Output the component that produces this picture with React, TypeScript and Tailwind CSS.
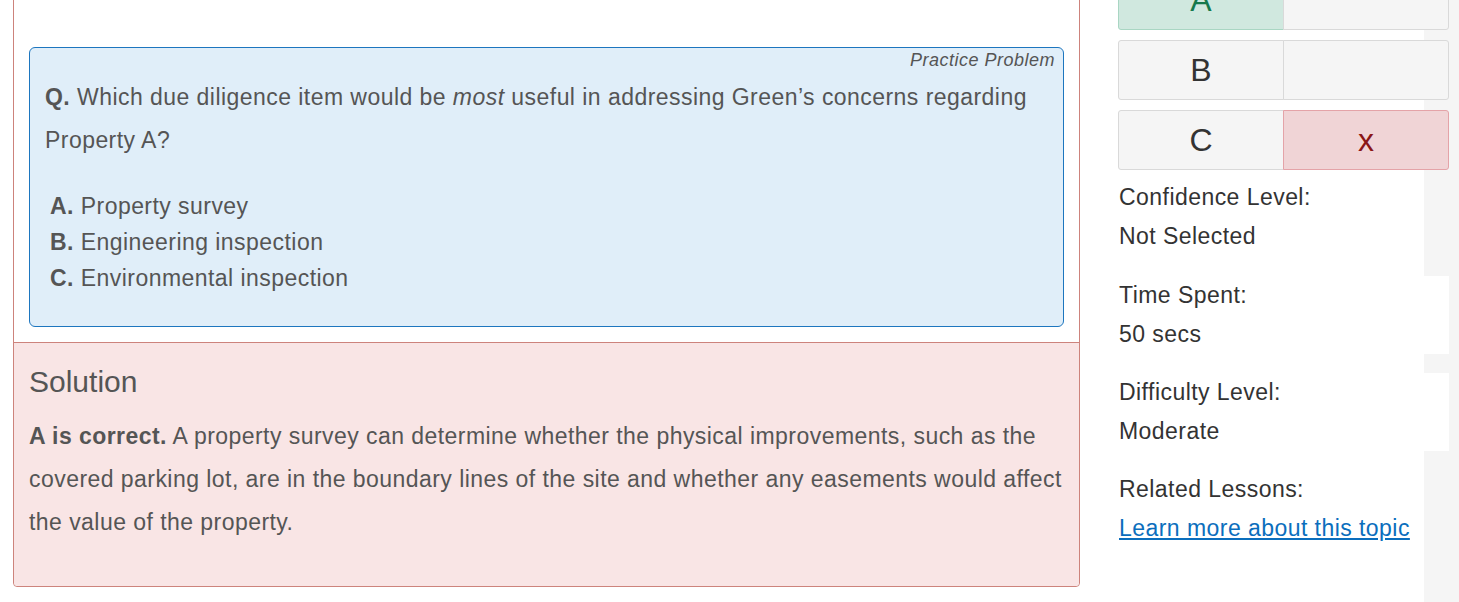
import React from 'react';

const options = [
    { letter: 'A', text: 'Property survey' },
    { letter: 'B', text: 'Engineering inspection' },
    { letter: 'C', text: 'Environmental inspection' },
];

const AnswerRow = ({ letter, state }: { letter: string; state: 'correct' | 'wrong' | 'none' }) => {
    const left =
        state === 'correct'
            ? 'bg-[#d0e8df] border-[#a9d6c3] text-[#16794d]'
            : 'bg-[#f5f5f5] border-[#d9d9d9] text-[#333]';
    const right =
        state === 'wrong'
            ? 'bg-[#f0d4d6] border-[#e4a3a8] text-[#8b1616]'
            : 'bg-[#f5f5f5] border-[#d9d9d9] text-[#333]';

    return (
        <div className="flex h-[60px]">
            <div className={`flex w-[166px] items-center justify-center rounded-l-[3px] border text-[32px] ${left}`}>
                {letter}
            </div>
            <div className={`-ml-px flex w-[166px] items-center justify-center rounded-r-[3px] border text-[32px] ${right}`}>
                {state === 'wrong' ? 'x' : ''}
            </div>
        </div>
    );
};

const Stat = ({ label, value, boxed, className = '' }: { label: string; value: React.ReactNode; boxed?: boolean; className?: string }) => (
    <div className={`pl-px text-[23px] leading-[39px] tracking-[0.45px] text-[#333] ${boxed ? 'bg-white' : ''} ${className}`}>
        <div>{label}</div>
        <div>{value}</div>
    </div>
);

export default function App() {
    return (
        <div className="h-[602px] w-[1459px] overflow-hidden bg-[#f5f5f5] font-['Liberation_Sans',Arial,sans-serif]">
            {/* page is scrolled a little, so the top is cut off */}
            <div className="-mt-[30px] flex min-h-[632px] w-[1424px] bg-white">
                {/* Question + solution panel */}
                <div className="shrink-0 pl-[13px]">
                    <div className="w-[1067px] rounded-b-[4px] border border-[#cd837c]">
                        <div className="px-[15px] pt-[76px] pb-[15px]">
                            <div className="rounded-[6px] border border-[#1d76bf] bg-[#e0eef9] pr-[8px] pb-[30px] pl-[15px] text-[#555]">
                                <div className="text-right text-[18px] leading-[24px] tracking-[0.5px] italic">Practice Problem</div>
                                <p className="mt-[4px] text-[23px] leading-[43px] tracking-[0.45px]">
                                    <b>Q.</b> Which due diligence item would be <i>most</i> useful in addressing Green’s concerns regarding Property A?
                                </p>
                                <ul className="mt-[26px] pl-[5px] text-[23px] leading-[36px] tracking-[0.45px]">
                                    {options.map((o) => (
                                        <li key={o.letter}>
                                            <b>{o.letter}.</b> {o.text}
                                        </li>
                                    ))}
                                </ul>
                            </div>
                        </div>
                        <div className="rounded-b-[4px] border-t border-[#cd837c] bg-[#f9e5e5] pt-[22px] pr-[6px] pb-[42px] pl-[15px] text-[#555]">
                            <h3 className="text-[30px] leading-[33px]">Solution</h3>
                            <p className="mt-[17px] text-[23px] leading-[43px] tracking-[0.45px]">
                                <b>A is correct.</b> A property survey can determine whether the physical improvements, such as the covered parking lot, are in the boundary lines of the site and whether any easements would affect the value of the property.
                            </p>
                        </div>
                    </div>
                </div>

                {/* Sidebar */}
                <div className="ml-[38px] w-[331px] shrink-0">
                    <div className="flex flex-col gap-[10px]">
                        <AnswerRow letter="A" state="correct" />
                        <AnswerRow letter="B" state="none" />
                        <AnswerRow letter="C" state="wrong" />
                    </div>
                    <Stat className="mt-[8px]" label="Confidence Level:" value="Not Selected" />
                    <Stat className="mt-[20px]" boxed label="Time Spent:" value="50 secs" />
                    <Stat className="mt-[19px]" boxed label="Difficulty Level:" value="Moderate" />
                    <Stat
                        className="mt-[19px]"
                        label="Related Lessons:"
                        value={<a href="#" className="text-[#0b6ebd] underline">Learn more about this topic</a>}
                    />
                </div>
            </div>
        </div>
    );
}
